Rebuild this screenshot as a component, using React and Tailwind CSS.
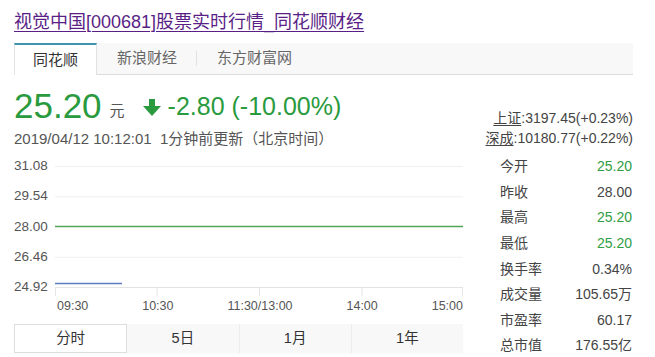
import React from "react";

const stats = [
  ["今开", "25.20", true],
  ["昨收", "28.00", false],
  ["最高", "25.20", true],
  ["最低", "25.20", true],
  ["换手率", "0.34%", false],
  ["成交量", "105.65万", false],
  ["市盈率", "60.17", false],
  ["总市值", "176.55亿", false],
];

function Chart() {
  const ys = [6, 36.25, 66.5, 96.75];
  const ticks = [0.5, 102, 204.5, 307, 407.5];
  return (
    <svg width="408" height="136" viewBox="0 0 408 136" className="block">
      {ys.map((y, i) =>
        i === 2 ? null : (
          <line key={i} x1="0" x2="408" y1={y + 0.5} y2={y + 0.5} stroke="#efefef" strokeWidth="1" />
        )
      )}
      <line x1="0" x2="408" y1="66.5" y2="66.5" stroke="#4fa857" strokeWidth="1.3" />
      <line x1="0" x2="408" y1="127.5" y2="127.5" stroke="#e3e3e3" strokeWidth="1" />
      {ticks.map((x, i) => (
        <line key={i} x1={x} x2={x} y1="127" y2="136" stroke="#e6e6e6" strokeWidth="1" />
      ))}
      <line x1="0" x2="67" y1="123.5" y2="123.5" stroke="#5b7dbf" strokeWidth="1.5" />
    </svg>
  );
}

export default function App() {
  return (
    <div
      className="w-[655px] h-[357px] bg-white overflow-hidden text-[#333]"
      style={{ fontFamily: '"Liberation Sans", "Noto Sans CJK SC", sans-serif' }}
    >
      <div className="pl-[14px] pt-[10px] h-[43px]">
        <a className="text-[18px] leading-[24px] text-[#5a1f86] underline underline-offset-[3px] decoration-1">
          视觉中国[000681]股票实时行情_同花顺财经
        </a>
      </div>

      <div className="ml-[14px] w-[619px] h-[32px] bg-[#f8f8f8] border-b border-[#dcdcdc] flex items-stretch">
        <div className="px-[18px] bg-white border-t-2 border-[#3b94ab] border-l border-r border-l-[#e2e2e2] border-r-[#e2e2e2] -mb-px flex items-center text-[15px] text-[#333]">
          同花顺
        </div>
        <div className="pl-[20px] pr-[19px] flex items-center text-[15px] text-[#666]">新浪财经</div>
        <div className="w-px my-[8px] bg-[#e2e2e2]" />
        <div className="px-[20px] flex items-center text-[15px] text-[#666]">东方财富网</div>
      </div>

      <div className="flex">
        <div className="ml-[14px] w-[449px]">
          <div className="h-[40px] mt-[11px] flex items-center">
            <span className="text-[35px] leading-[40px] text-[#2a9a3e]">25.20</span>
            <span className="text-[15px] text-[#555] ml-[8px] mt-[10px]">元</span>
            <svg width="18" height="18" viewBox="0 0 18 18" className="ml-[18px] mt-[4px]">
              <rect x="6" y="0" width="6" height="8" fill="#2a9a3e" />
              <polygon points="0,7 18,7 9,17" fill="#2a9a3e" />
            </svg>
            <span className="text-[25px] leading-[40px] text-[#2a9a3e] ml-[7px]">-2.80 (-10.00%)</span>
          </div>
          <div className="mt-[3px] h-[20px] text-[15px] leading-[20px] text-[#555]">
            2019/04/12 10:12:01&nbsp; 1分钟前更新（北京时间）
          </div>

          <div className="mt-[11px] flex">
            <div className="w-[41px] h-[133px] flex flex-col justify-between text-[13.5px] leading-[12px] text-[#555]">
              <div>31.08</div>
              <div>29.54</div>
              <div>28.00</div>
              <div>26.46</div>
              <div>24.92</div>
            </div>
            <div className="w-[408px]">
              <Chart />
            </div>
          </div>
          <div className="ml-[41px] w-[408px] flex justify-between text-[12.5px] leading-[14px] text-[#555] mt-[3px] pl-[2px]">
            <span>09:30</span>
            <span>10:30</span>
            <span>11:30/13:00</span>
            <span>14:00</span>
            <span>15:00</span>
          </div>

          <div className="mt-[11px] h-[29px] bg-[#f8f8f8] flex text-[14.5px] text-[#333]">
            <div className="flex-1 bg-white border border-[#dddddd] flex items-center justify-center">分时</div>
            <div className="flex-1 flex items-center justify-center border-r border-[#ececec]">5日</div>
            <div className="flex-1 flex items-center justify-center border-r border-[#ececec]">1月</div>
            <div className="flex-1 flex items-center justify-center">1年</div>
          </div>
        </div>

        <div className="ml-[22px] w-[148px] pt-[33px] text-[14px] text-[#444]">
          <div className="text-right leading-[20px]">
            <span className="underline underline-offset-2">上证</span>:3197.45(+0.23%)
          </div>
          <div className="text-right leading-[20px]">
            <span className="underline underline-offset-2">深成</span>:10180.77(+0.22%)
          </div>
          <div className="mt-[6px]">
            {stats.map(([k, v, g]) => (
              <div key={k} className="h-[25.6px] flex items-center justify-between pl-[15px] pr-px">
                <span className="text-[#444]">{k}</span>
                <span className={g ? "text-[#2f9e44]" : "text-[#444]"}>{v}</span>
              </div>
            ))}
          </div>
        </div>
      </div>
    </div>
  );
}
